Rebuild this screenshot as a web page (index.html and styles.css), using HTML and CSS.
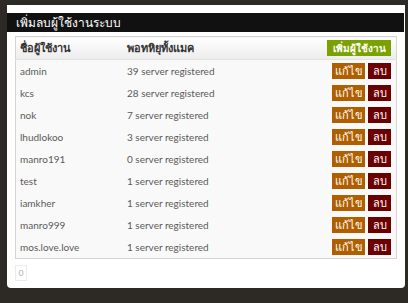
FILE: index.html
```html
<!DOCTYPE html>
<html lang="th">
<head>
    <meta charset="UTF-8">
    <title>เพิ่มลบผู้ใช้งานระบบ</title>
    <link rel="stylesheet" href="styles.css">
</head>
<body>
    <div class="panel">
        <h2 class="panel-title">เพิ่มลบผู้ใช้งานระบบ</h2>
        <div class="panel-body">
            <table class="users">
                <thead>
                    <tr>
                        <th class="col-name">ชื่อผู้ใช้งาน</th>
                        <th>พอทหิยุทั้งแมค</th>
                        <th class="col-actions"><a class="btn btn-add">เพิ่มผู้ใช้งาน</a></th>
                    </tr>
                </thead>
                <tbody>
                    <tr><td>admin</td><td>39 server registered</td><td class="col-actions"><a class="btn btn-edit">แก้ไข</a><a class="btn btn-del">ลบ</a></td></tr>
                    <tr><td>kcs</td><td>28 server registered</td><td class="col-actions"><a class="btn btn-edit">แก้ไข</a><a class="btn btn-del">ลบ</a></td></tr>
                    <tr><td>nok</td><td>7 server registered</td><td class="col-actions"><a class="btn btn-edit">แก้ไข</a><a class="btn btn-del">ลบ</a></td></tr>
                    <tr><td>lhudlokoo</td><td>3 server registered</td><td class="col-actions"><a class="btn btn-edit">แก้ไข</a><a class="btn btn-del">ลบ</a></td></tr>
                    <tr><td>manro191</td><td>0 server registered</td><td class="col-actions"><a class="btn btn-edit">แก้ไข</a><a class="btn btn-del">ลบ</a></td></tr>
                    <tr><td>test</td><td>1 server registered</td><td class="col-actions"><a class="btn btn-edit">แก้ไข</a><a class="btn btn-del">ลบ</a></td></tr>
                    <tr><td>iamkher</td><td>1 server registered</td><td class="col-actions"><a class="btn btn-edit">แก้ไข</a><a class="btn btn-del">ลบ</a></td></tr>
                    <tr><td>manro999</td><td>1 server registered</td><td class="col-actions"><a class="btn btn-edit">แก้ไข</a><a class="btn btn-del">ลบ</a></td></tr>
                    <tr><td>mos.love.love</td><td>1 server registered</td><td class="col-actions"><a class="btn btn-edit">แก้ไข</a><a class="btn btn-del">ลบ</a></td></tr>
                </tbody>
            </table>
            <div class="pager"><span class="page">0</span></div>
        </div>
    </div>
</body>
</html>
```

FILE: styles.css
```css
body {
    margin: 0;
    padding: 5px 3px 0 7px;
    background-color: #2d2925;
    font-family: Lato, "Noto Sans", "DejaVu Sans", sans-serif;
    font-size: 10px;
    color: #555;
}
.panel {
    width: 398px;
    height: 283px;
    box-sizing: border-box;
    background: #fff;
    border-radius: 0 0 4px 4px;
    padding-top: 8px;
}
.panel-title {
    margin: 0 1px 0 0;
    height: 19px;
    line-height: 19px;
    background: #111;
    color: #fff;
    font-size: 12px;
    font-weight: normal;
    padding-left: 9px;
}
.panel-body {
    padding: 4px 8px 0 8px;
}
.users {
    width: 100%;
    border-collapse: collapse;
    border: 1px solid #d4d4d4;
    background: #f9f9f9;
}
.users th {
    height: 22px;
    padding: 0 0 0 4px;
    text-align: left;
    font-size: 11px;
    font-weight: bold;
    color: #333;
    background: linear-gradient(#fff, #ececec);
    border-bottom: 1px solid #e2e2e2;
}
.users td {
    height: 22px;
    padding: 0 0 0 4px;
    color: #5a5a5a;
}
.col-name {
    width: 103px;
}
.users .col-actions {
    text-align: right;
    padding-right: 5px;
    white-space: nowrap;
}
.btn {
    display: inline-block;
    color: #fff;
    height: 16px;
    line-height: 16px;
    font-size: 11px;
    font-weight: normal;
    vertical-align: middle;
}
.btn-add {
    background: #7aa100;
    width: 64px;
    text-align: center;
    font-size: 10px;
    font-weight: bold;
}
.btn-edit {
    background: #b05f00;
    width: 33px;
    text-align: center;
    margin-right: 3px;
}
.btn-del {
    background: #6b0000;
    width: 23px;
    text-align: center;
}
.pager {
    margin-top: 6px;
}
.page {
    display: inline-block;
    width: 10px;
    height: 14px;
    line-height: 14px;
    border: 1px solid #ebebeb;
    color: #aaa;
    font-size: 8px;
    text-align: center;
}
```
